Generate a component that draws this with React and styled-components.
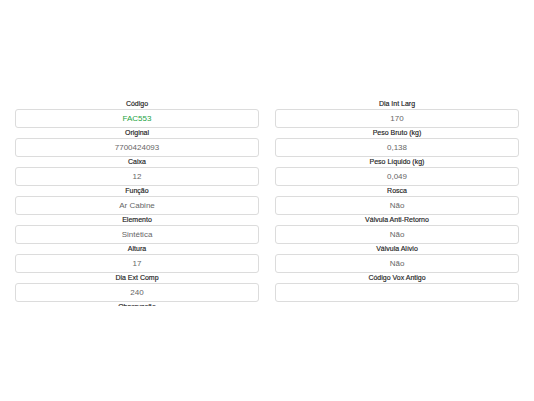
import React from 'react'
import styled, { createGlobalStyle } from 'styled-components'

const Global = createGlobalStyle`
  html, body { margin:0; padding:0; background:#fff; }
  body { font-family: "Liberation Sans", Arial, sans-serif; }
`

const Page = styled.div`
  width:534px;
  height:401px;
  background:#fff;
`

const Sheet = styled.div`
  padding:99px 15px 0;
  height:207px;
  overflow:hidden;
  display:grid;
  grid-template-columns:1fr 1fr;
  column-gap:16px;
  align-items:start;
`

const Column = styled.div`
  display:flex;
  flex-direction:column;
`

const Field = styled.div`
  display:flex;
  flex-direction:column;
  align-items:stretch;
`

const Label = styled.label`
  font-size:7px;
  line-height:10px;
  height:10px;
  font-weight:normal;
  color:#222;
  text-align:center;
  -webkit-text-stroke:0.15px #222;
`

const Box = styled.div`
  box-sizing:border-box;
  height:19px;
  border:1px solid #dcdcdc;
  border-radius:3px;
  display:flex;
  align-items:center;
  justify-content:center;
  font-size:8px;
  color:${p => (p.$accent ? '#23a43f' : '#666')};
`

const left = [
  ['Código', 'FAC553', true],
  ['Original', '7700424093'],
  ['Caixa', '12'],
  ['Função', 'Ar Cabine'],
  ['Elemento', 'Sintética'],
  ['Altura', '17'],
  ['Dia Ext Comp', '240'],
  ['Observação', ''],
]

const right = [
  ['Dia Int Larg', '170'],
  ['Peso Bruto (kg)', '0,138'],
  ['Peso Líquido (kg)', '0,049'],
  ['Rosca', 'Não'],
  ['Válvula Anti-Retorno', 'Não'],
  ['Válvula Alívio', 'Não'],
  ['Código Vox Antigo', ''],
]

const Col = ({ items }) => (
  <Column>
    {items.map(([label, value, accent]) => (
      <Field key={label}>
        <Label>{label}</Label>
        <Box $accent={accent}>{value}</Box>
      </Field>
    ))}
  </Column>
)

export default function App() {
  return (
    <Page>
      <Global />
      <Sheet>
        <Col items={left} />
        <Col items={right} />
      </Sheet>
    </Page>
  )
}
